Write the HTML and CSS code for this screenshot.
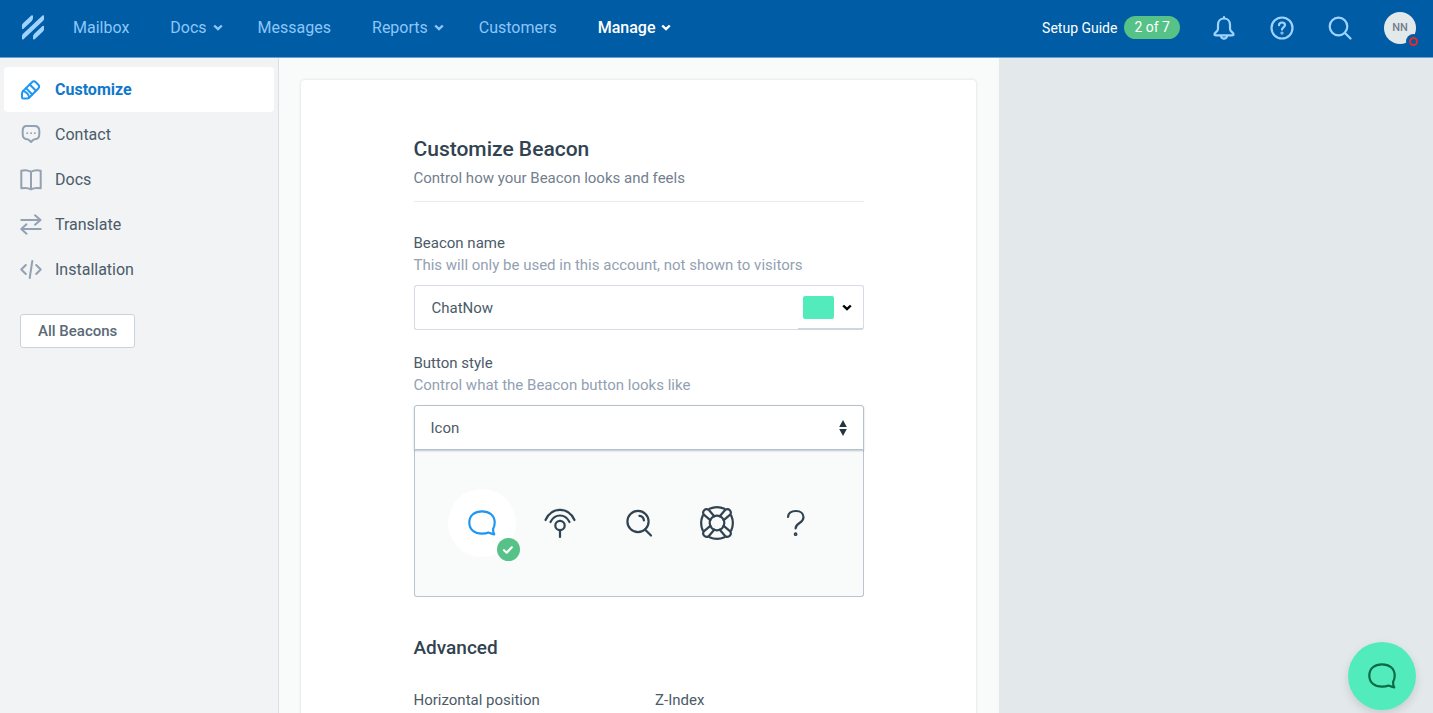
FILE: index.html
```
<!DOCTYPE html>
<html lang="en">

<head>
  <meta charset="UTF-8" />
  <meta name="viewport" content="width=device-width,initial-scale=1.0" />
  <title>Customize Beacon</title>
  <link rel="stylesheet" href="styles.css">
</head>

<body>
  <header class="topbar">
    <a href="#" class="logo" aria-label="Home">
      <svg width="22" height="25" viewBox="0 0 22 25">
        <path d="M.8 13V11.500Q.8 9.800 2 8.700L10 1.300V2.800Q10 4.400 8.900 5.400Z" />
        <path d="M.8 23.500V22Q.8 20.400 2 19.300L21.200 1.300V2.900Q21.200 4.500 20 5.600Z" />
        <path d="M12 23.500V22Q12 20.400 13.200 19.300L21.200 11.800V13.300Q21.200 14.900 20 16Z" />
      </svg>
    </a>

    <nav class="main-nav">
      <a href="#">Mailbox</a>
      <a href="#">Docs
        <svg class="caret" width="10" height="7" viewBox="0 0 10 7"><path d="M1.200 1.500 5 5.200l3.800-3.700" /></svg>
      </a>
      <a href="#">Messages</a>
      <a href="#">Reports
        <svg class="caret" width="10" height="7" viewBox="0 0 10 7"><path d="M1.200 1.500 5 5.200l3.800-3.700" /></svg>
      </a>
      <a href="#">Customers</a>
      <a href="#" class="active">Manage
        <svg class="caret" width="10" height="7" viewBox="0 0 10 7"><path d="M1.200 1.500 5 5.200l3.800-3.700" /></svg>
      </a>
    </nav>

    <div class="tools">
      <a href="#" class="setup">Setup Guide <span class="pill">2 of 7</span></a>
      <button type="button" class="tool" aria-label="Notifications">
        <svg width="24" height="26" viewBox="0 0 24 26">
          <path d="M12 3.500V2M12 3.500C8.500 3.500 6 6.200 6 9.800V14c0 2.500-3.500 3.500-3.500 5.200 0 .9.600 1.100 1.600 1.100h15.800c1 0 1.600-.2 1.600-1.100 0-1.700-3.500-2.700-3.500-5.200V9.800c0-3.600-2.500-6.300-6-6.300z" />
          <path d="M8.800 21c.5 1.700 1.700 2.600 3.200 2.600s2.700-.9 3.200-2.600" />
        </svg>
      </button>
      <button type="button" class="tool" aria-label="Help">
        <svg width="24" height="24" viewBox="0 0 24 24">
          <circle cx="12" cy="12" r="10.500" />
          <path d="M9 9.200c.1-1.700 1.300-2.700 3-2.700s3 1 3 2.600c0 2.200-3 2.200-3 4.500" />
          <circle cx="12" cy="17" r=".5" />
        </svg>
      </button>
      <button type="button" class="tool" aria-label="Search">
        <svg width="24" height="24" viewBox="0 0 24 24">
          <circle cx="10.500" cy="10.500" r="8.800" />
          <path d="m17 17 5.500 5.500" />
        </svg>
      </button>
      <button type="button" class="avatar">NN<span class="status"></span></button>
    </div>
  </header>

  <div class="layout">
    <aside class="sidebar">
      <nav class="side-nav">
        <a href="#" class="active">
          <svg width="22" height="22" viewBox="0 0 22 22">
            <path d="M2 14.500c0-1 .3-1.700 1-2.400L12 3.200c1.200-1.200 2.600-1.200 3.800 0l2.500 2.500c1.200 1.200 1.200 2.600 0 3.800l-9 9c-.7.7-1.400 1-2.400 1H3.200c-.8 0-1.200-.4-1.200-1.200z" />
            <path d="M3 12.100c2.800.6 5.500 3.200 6.300 6.400M9.700 5.500l6.300 6.300M6 9.100l6.300 6.400" />
          </svg>
          Customize
        </a>
        <a href="#">
          <svg width="22" height="22" viewBox="0 0 22 22">
            <path d="M6.500 2h8C17.700 2 19.300 3.600 19.300 6.800v3.400c0 3.200-1.600 4.800-4.500 5-1 .1-1.500.4-2 1L11 18l-1.800-1.800c-.5-.6-1-.9-2-1-2.900-.2-4.500-1.800-4.500-5V6.800C2.700 3.600 4.300 2 6.500 2z" />
            <path d="M7.200 9.200h.1M11 9.200h.1M14.800 9.200h.1" stroke-width="1.800" />
          </svg>
          Contact
        </a>
        <a href="#">
          <svg width="22" height="22" viewBox="0 0 22 22">
            <path d="M11 2.800C8.200 1.300 4.500 1.100 1.300 1.700v17.600c3.200-.6 7-.5 9.700 1 2.700-1.500 6.500-1.600 9.700-1V1.700C17.500 1.100 13.800 1.300 11 2.800zM11 2.800v17.500" />
          </svg>
          Docs
        </a>
        <a href="#">
          <svg width="22" height="22" viewBox="0 0 22 22">
            <path d="M1.300 6h19M15 1.300 20.500 6 15 10.700M20.700 15h-19M6.500 10.300 1.300 15l5.200 4.700" />
          </svg>
          Translate
        </a>
        <a href="#">
          <svg width="22" height="22" viewBox="0 0 22 22">
            <path d="M5.800 6 1.300 10.500l4.500 4.500M16.200 6l4.500 4.500-4.500 4.500M12.300 2 9.700 19" />
          </svg>
          Installation
        </a>
      </nav>
      <button type="button" class="all-beacons">All Beacons</button>
    </aside>

    <main class="main">
      <form class="card">
        <div class="content">
          <div class="page-head">
            <h1>Customize Beacon</h1>
            <p>Control how your Beacon looks and feels</p>
          </div>

          <div class="field">
            <label for="beacon-name">Beacon name</label>
            <p class="help">This will only be used in this account, not shown to visitors</p>
            <div class="name-row">
              <input type="text" id="beacon-name" value="ChatNow">
              <button type="button" class="color" aria-label="Beacon color">
                <span class="swatch"></span>
                <svg class="caret" width="10" height="7" viewBox="0 0 10 7"><path d="M1.200 1.500 5 5.200l3.800-3.700" /></svg>
              </button>
            </div>
          </div>

          <div class="field">
            <label for="button-style">Button style</label>
            <p class="help">Control what the Beacon button looks like</p>
            <div class="select">
              <select id="button-style">
                <option>Icon</option>
              </select>
              <svg class="arrows" width="8" height="16" viewBox="0 0 8 16"><path d="M4 0 7.800 7H.2zM4 16 .2 9h7.600z" /></svg>
            </div>

            <div class="icons">
              <label class="icon-option">
                <input type="radio" name="icon" checked aria-label="Message">
                <svg width="28" height="26" viewBox="0 0 28 26">
                  <path d="M14 1.300C6.700 1.300 1.300 5.500 1.300 12.500S6.700 23.700 14 23.700c2.600 0 4.700-.300 6.500-1.200 1.800.7 3.500 1.700 5.700 1.900-1-1.800-1.200-3.600-1.100-5.600 1.200-1.800 1.600-3.800 1.600-6.300 0-7-5.400-11.200-12.700-11.200z" />
                </svg>
                <span class="badge">
                  <svg width="12" height="10" viewBox="0 0 12 10"><path d="m2 5.200 2.700 2.500L9.800 2.300" /></svg>
                </span>
              </label>
              <label class="icon-option">
                <input type="radio" name="icon" aria-label="Antenna">
                <svg width="32" height="32" viewBox="0 0 32 32">
                  <circle cx="16" cy="18.500" r="4.700" />
                  <path d="M16 23.500V30M1.500 13C4.300 6.500 9.500 2.800 16 2.800S27.700 6.500 30.500 13M6.500 15C8.600 10.800 12 8.500 16 8.500s7.400 2.300 9.500 6.500" />
                </svg>
              </label>
              <label class="icon-option">
                <input type="radio" name="icon" aria-label="Search">
                <svg width="26" height="28" viewBox="0 0 26 28">
                  <circle cx="12" cy="12.500" r="10.600" />
                  <path d="m19 20.500 6 6M13.500 6.800c2.600.3 4.200 2.100 4.400 4.600" />
                </svg>
              </label>
              <label class="icon-option">
                <input type="radio" name="icon" aria-label="Buoy">
                <svg width="34" height="34" viewBox="0 0 34 34">
                  <circle cx="17" cy="17" r="7.300" />
                  <path d="M9.500 2.800c4.700-2.100 10.300-2.100 15 0M31.200 9.500c2.100 4.700 2.100 10.300 0 15M24.500 31.200c-4.700 2.100-10.300 2.100-15 0M2.800 24.500C.7 19.800.7 14.200 2.800 9.500" />
                  <path d="M10.300 14.200 3.800 8.700C1.800 5.200 5.200 1.800 8.700 3.800l5.500 6.500M19.800 10.300l5.500-6.500c3.500-2 6.900 1.400 4.900 4.900l-6.500 5.500M23.700 19.800l6.500 5.500c2 3.500-1.400 6.900-4.900 4.900l-5.500-6.500M14.200 23.700l-5.500 6.500c-3.500 2-6.900-1.400-4.900-4.900l6.500-5.500" />
                </svg>
              </label>
              <label class="icon-option">
                <input type="radio" name="icon" aria-label="Question mark">
                <svg width="20" height="28" viewBox="0 0 20 28">
                  <path d="M2 8C2.300 4 5.500 2 10 2c4.600 0 7.500 2.600 7.500 6.300C17.500 14.500 9.600 13.500 9.600 19.500" />
                  <circle cx="9.600" cy="25.200" r=".8" />
                </svg>
              </label>
            </div>
          </div>

          <h2>Advanced</h2>
          <div class="columns">
            <div class="field">
              <label for="position">Horizontal position</label>
              <input type="text" id="position">
            </div>
            <div class="field">
              <label for="z-index">Z-Index</label>
              <input type="text" id="z-index">
            </div>
          </div>
        </div>
      </form>
    </main>

    <section class="preview"></section>
  </div>

  <button type="button" class="beacon" aria-label="Open Beacon">
    <svg width="28" height="26" viewBox="0 0 28 26">
      <path d="M14 1.300C6.700 1.300 1.300 5.500 1.300 12.500S6.700 23.700 14 23.700c2.600 0 4.700-.300 6.500-1.200 1.800.7 3.500 1.700 5.700 1.900-1-1.800-1.200-3.600-1.100-5.600 1.200-1.800 1.600-3.800 1.600-6.300 0-7-5.400-11.200-12.700-11.200z" />
    </svg>
  </button>
</body>

</html>
```
FILE: styles.css
```
* {
  box-sizing: border-box;
}

body {
  display: flex;
  flex-direction: column;
  height: 100vh;
  margin: 0;
  overflow: hidden;
  font-family: Roboto, "Liberation Sans", sans-serif;
  font-size: 15px;
  line-height: 22px;
  color: #4b5b68;
}

h1,
h2,
p {
  margin: 0;
}

a {
  color: inherit;
  text-decoration: none;
}

button,
input,
select {
  font: inherit;
  color: inherit;
}

button {
  cursor: pointer;
}

svg {
  flex: none;
}

/* top bar */
.topbar {
  display: flex;
  align-items: center;
  height: 58px;
  padding: 0 17px 2px 22px;
  border-bottom: 1px solid #6f9fcb;
  background: #005ca4;
  color: #8cc6fa;
}

.logo {
  display: flex;
  margin-right: 29px;
}

.logo svg {
  fill: #9fd3ff;
  stroke: #9fd3ff;
  stroke-width: 2;
  stroke-linejoin: round;
}

.main-nav {
  display: flex;
  gap: 41px;
  font-size: 16px;
}

.main-nav a {
  display: flex;
  align-items: center;
  gap: 6px;
}

.main-nav .caret {
  margin-right: -6px;
}

.main-nav .active {
  color: #fff;
  font-weight: 500;
}

.caret {
  fill: none;
  stroke: currentColor;
  stroke-width: 2.400;
}

.tools {
  display: flex;
  align-items: center;
  gap: 30px;
  margin-left: auto;
}

.setup {
  display: flex;
  align-items: center;
  gap: 7px;
  font-size: 14px;
  color: #fff;
}

.pill {
  padding: 0 10px;
  border-radius: 12px;
  background: #56c288;
  line-height: 23px;
}

.tool {
  display: flex;
  align-items: center;
  justify-content: center;
  width: 28px;
  height: 28px;
  padding: 0;
  border: 0;
  background: none;
}

.tool svg {
  fill: none;
  stroke: #9fd3ff;
  stroke-width: 2.200;
  stroke-linecap: round;
}

.avatar {
  position: relative;
  width: 32px;
  height: 32px;
  padding: 0;
  border: 0;
  border-radius: 50%;
  background: #e3e8eb;
  font-size: 11px;
  font-weight: 500;
  color: #72808e;
}

.status {
  position: absolute;
  right: -2px;
  bottom: -2px;
  width: 9px;
  height: 9px;
  border: 2px solid #e32b2d;
  border-radius: 50%;
  background: #005ca4;
  box-shadow: 0 0 0 3px #005ca4;
}

/* page columns */
.layout {
  display: grid;
  grid-template-columns: 279px minmax(480px, 720px) 1fr;
  flex: 1;
  min-height: 0;
}

.sidebar {
  padding: 9px 4px;
  border-right: 1px solid #d9e0e6;
  background: #f1f3f5;
}

.side-nav a {
  display: flex;
  align-items: center;
  gap: 13px;
  height: 45px;
  padding-left: 16px;
  border-radius: 4px;
  font-size: 16px;
}

.side-nav svg {
  fill: none;
  stroke: #93a1b2;
  stroke-width: 2;
  stroke-linecap: round;
  stroke-linejoin: round;
}

.side-nav .active {
  background: #fff;
  color: #1078ca;
  font-weight: 700;
}

.side-nav .active svg {
  stroke: #1f96f2;
}

.all-beacons {
  height: 34px;
  margin: 22px 16px;
  padding: 0 17px;
  border: 1px solid #c9d3dc;
  border-radius: 3px;
  background: #fff;
  font-weight: 500;
  color: #5b6a77;
}

.main {
  padding: 22px 23px 0 22px;
  overflow: hidden;
  background: #f9fafa;
}

.card {
  min-height: 100%;
  padding: 55px 20px;
  border-radius: 4px 4px 0 0;
  background: #fff;
  box-shadow: 0 0 3px rgba(0, 0, 0, .14);
}

.content {
  max-width: 450px;
  margin: 0 auto;
}

.preview {
  background: #e3e8eb;
}

/* form */
.page-head {
  margin-bottom: 30px;
  padding-bottom: 12px;
  border-bottom: 1px solid #e8eced;
  color: #72808e;
}

h1 {
  margin-bottom: 4px;
  font-size: 21px;
  font-weight: 500;
  line-height: 28px;
  color: #314351;
}

.field {
  margin-bottom: 22px;
}

.field label {
  display: block;
}

.help {
  margin-bottom: 9px;
  color: #93a1b2;
}

.name-row {
  display: flex;
  height: 45px;
}

.name-row input {
  flex: 1;
  min-width: 0;
  padding: 0 17px;
  border: 1px solid #d5dce3;
  border-right: 0;
  border-radius: 3px 0 0 3px;
  outline: 0;
}

.color {
  display: flex;
  align-items: center;
  gap: 8px;
  width: 66px;
  padding: 0 5px;
  border: 1px solid #d5dce3;
  border-bottom: 2px solid #cfd6dd;
  border-left: 0;
  border-radius: 0 3px 3px 0;
  background: #fff;
  color: #000;
}

.swatch {
  width: 31px;
  height: 23px;
  border-radius: 2px;
  background: #51ebbc;
}

.select {
  position: relative;
}

.select select {
  display: block;
  width: 100%;
  height: 45px;
  padding: 0 16px;
  border: 1px solid #b5c1cc;
  border-radius: 3px 3px 0 0;
  background: #fff;
  appearance: none;
  box-shadow: 0 1px 2px rgba(80, 100, 120, .35);
}

.arrows {
  position: absolute;
  top: 15px;
  right: 17px;
  fill: #253642;
  pointer-events: none;
}

.icons {
  display: flex;
  align-items: center;
  justify-content: space-between;
  height: 147px;
  padding: 0 33px;
  border: 1px solid #b9c4ce;
  border-top: 0;
  border-radius: 0 0 3px 3px;
  background: #f9fafa;
}

.icons .icon-option {
  position: relative;
  display: flex;
  align-items: center;
  justify-content: center;
  width: 68px;
  height: 68px;
  border-radius: 50%;
  cursor: pointer;
}

.icon-option input {
  position: absolute;
  opacity: 0;
}

.icon-option svg,
.beacon svg {
  fill: none;
  stroke: #314351;
  stroke-width: 2.200;
  stroke-linecap: round;
  stroke-linejoin: round;
}

.icon-option:has(:checked) {
  background: #fff;
}

.icon-option :checked + svg {
  stroke: #1f96f2;
}

.badge {
  position: absolute;
  right: -4px;
  bottom: -4px;
  display: flex;
  align-items: center;
  justify-content: center;
  width: 23px;
  height: 23px;
  border-radius: 50%;
  background: #56c288;
}

.icon-option .badge svg {
  stroke: #fff;
}

h2 {
  margin: 38px 0 28px;
  font-size: 19px;
  font-weight: 500;
  line-height: 26px;
  color: #314351;
}

.columns {
  display: grid;
  grid-template-columns: 1fr 1fr;
  gap: 33px;
}

.columns input {
  width: 100%;
  height: 45px;
  margin-top: 9px;
  padding: 0 17px;
  border: 1px solid #d5dce3;
  border-radius: 3px;
}

/* floating beacon */
.beacon {
  position: fixed;
  right: 17px;
  bottom: 3px;
  display: flex;
  align-items: center;
  justify-content: center;
  width: 68px;
  height: 68px;
  padding: 0;
  border: 0;
  border-radius: 50%;
  background: #51ebbc;
  box-shadow: 0 4px 10px rgba(0, 0, 0, .12);
}

.beacon svg {
  stroke: #0a6b45;
}
```
